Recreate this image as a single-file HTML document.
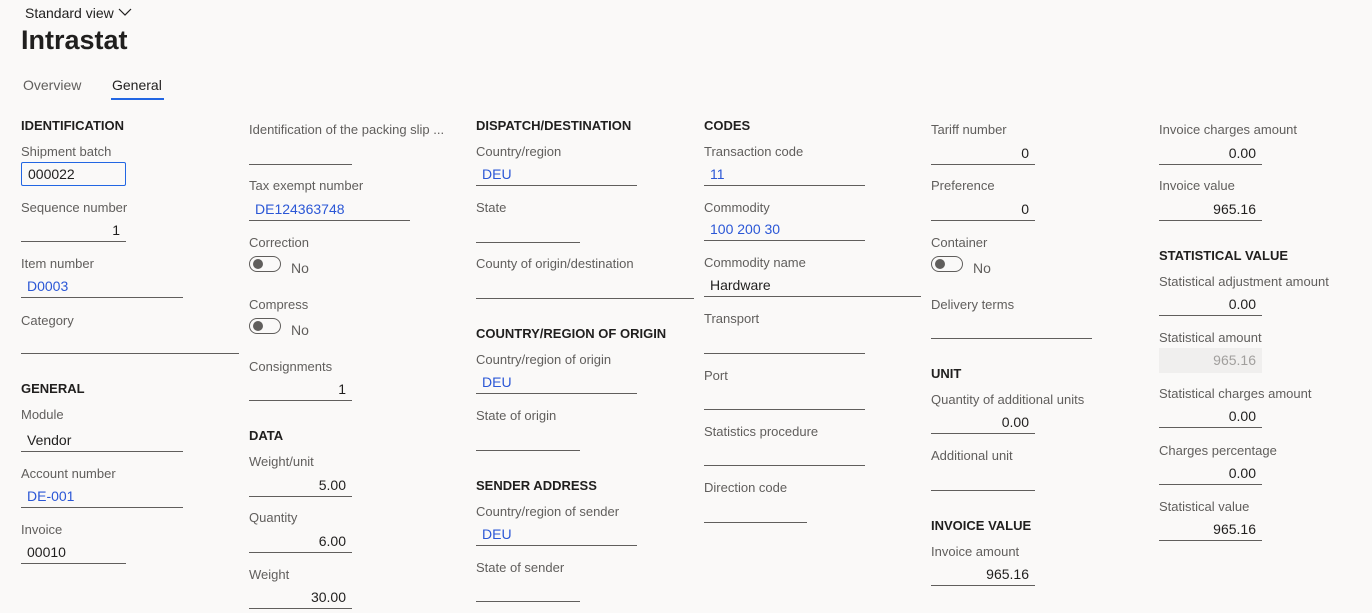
<!DOCTYPE html>
<html><head><meta charset="utf-8"><style>
body{margin:0;width:1372px;height:613px;background:#faf9f8;font-family:"Segoe UI","Liberation Sans",sans-serif;position:relative;overflow:hidden;color:#201f1e}
.a{position:absolute;white-space:nowrap}
.l{position:absolute;font-size:13px;line-height:16px;color:#605e5c;white-space:nowrap;margin-top:1px}
.h{position:absolute;font-size:13px;line-height:16px;font-weight:bold;color:#201f1e;white-space:nowrap;margin-top:1px}
.f{position:absolute;height:24px;border-bottom:1px solid #605e5c;font-size:14px;line-height:24px;padding:0 6px;box-sizing:border-box;color:#201f1e;white-space:nowrap}
.r{text-align:right}
.b{color:#2b57d6}
.t{position:absolute;width:32px;height:16px;border:1px solid #605e5c;border-radius:9px;box-sizing:border-box}
.t:after{content:"";position:absolute;left:3px;top:2px;width:10px;height:10px;border-radius:50%;background:#605e5c}
.no{position:absolute;font-size:14px;line-height:16px;color:#605e5c}
</style></head><body>
<div class="a" style="left:25px;top:4px;font-size:14px;line-height:18px">Standard view <svg width="14" height="10" viewBox="0 0 14 10" style="vertical-align:1px"><path d="M1 2 L7 8 L13 2" fill="none" stroke="#201f1e" stroke-width="1.2"/></svg></div>
<div class="a" style="left:21px;top:22px;font-size:27px;line-height:36px;font-weight:600">Intrastat</div>
<div class="a" style="left:23px;top:76px;font-size:14px;line-height:18px;color:#605e5c">Overview</div>
<div class="a" style="left:112px;top:76px;font-size:14px;line-height:18px">General</div>
<div class="a" style="left:111px;top:98px;width:53px;height:2px;background:#2266e3"></div>

<!-- col1 -->
<div class="h" style="left:21px;top:117px">IDENTIFICATION</div>
<div class="l" style="left:21px;top:143px">Shipment batch</div>
<div class="a" style="left:21px;top:162px;width:105px;height:24px;border:1px solid #2266e3;border-radius:2px;box-sizing:border-box;font-size:14px;line-height:22px;padding-left:6px">000022</div>
<div class="l" style="left:21px;top:199px">Sequence number</div>
<div class="f r" style="left:21px;top:218px;width:105px">1</div>
<div class="l" style="left:21px;top:255px">Item number</div>
<div class="f b" style="left:21px;top:274px;width:162px">D0003</div>
<div class="l" style="left:21px;top:312px">Category</div>
<div class="f" style="left:21px;top:330px;width:218px"></div>
<div class="h" style="left:21px;top:380px">GENERAL</div>
<div class="l" style="left:21px;top:406px">Module</div>
<div class="f" style="left:21px;top:428px;width:162px">Vendor</div>
<div class="l" style="left:21px;top:465px">Account number</div>
<div class="f b" style="left:21px;top:484px;width:162px">DE-001</div>
<div class="l" style="left:21px;top:521px">Invoice</div>
<div class="f" style="left:21px;top:540px;width:105px">00010</div>

<!-- col2 -->
<div class="l" style="left:249px;top:121px">Identification of the packing slip ...</div>
<div class="f" style="left:249px;top:141px;width:103px"></div>
<div class="l" style="left:249px;top:177px">Tax exempt number</div>
<div class="f b" style="left:249px;top:197px;width:161px">DE124363748</div>
<div class="l" style="left:249px;top:234px">Correction</div>
<div class="t" style="left:249px;top:256px"></div><div class="no" style="left:291px;top:260px">No</div>
<div class="l" style="left:249px;top:296px">Compress</div>
<div class="t" style="left:249px;top:318px"></div><div class="no" style="left:291px;top:322px">No</div>
<div class="l" style="left:249px;top:358px">Consignments</div>
<div class="f r" style="left:249px;top:377px;width:103px">1</div>
<div class="h" style="left:249px;top:427px">DATA</div>
<div class="l" style="left:249px;top:453px">Weight/unit</div>
<div class="f r" style="left:249px;top:473px;width:103px">5.00</div>
<div class="l" style="left:249px;top:509px">Quantity</div>
<div class="f r" style="left:249px;top:529px;width:103px">6.00</div>
<div class="l" style="left:249px;top:566px">Weight</div>
<div class="f r" style="left:249px;top:585px;width:103px">30.00</div>

<!-- col3 -->
<div class="h" style="left:476px;top:117px">DISPATCH/DESTINATION</div>
<div class="l" style="left:476px;top:143px">Country/region</div>
<div class="f b" style="left:476px;top:162px;width:161px">DEU</div>
<div class="l" style="left:476px;top:199px">State</div>
<div class="f" style="left:476px;top:219px;width:104px"></div>
<div class="l" style="left:476px;top:255px">County of origin/destination</div>
<div class="f" style="left:476px;top:275px;width:218px"></div>
<div class="h" style="left:476px;top:325px">COUNTRY/REGION OF ORIGIN</div>
<div class="l" style="left:476px;top:351px">Country/region of origin</div>
<div class="f b" style="left:476px;top:370px;width:161px">DEU</div>
<div class="l" style="left:476px;top:407px">State of origin</div>
<div class="f" style="left:476px;top:427px;width:104px"></div>
<div class="h" style="left:476px;top:477px">SENDER ADDRESS</div>
<div class="l" style="left:476px;top:503px">Country/region of sender</div>
<div class="f b" style="left:476px;top:522px;width:161px">DEU</div>
<div class="l" style="left:476px;top:559px">State of sender</div>
<div class="f" style="left:476px;top:578px;width:104px"></div>

<!-- col4 -->
<div class="h" style="left:704px;top:117px">CODES</div>
<div class="l" style="left:704px;top:143px">Transaction code</div>
<div class="f b" style="left:704px;top:162px;width:161px">11</div>
<div class="l" style="left:704px;top:199px">Commodity</div>
<div class="f b" style="left:704px;top:217px;width:161px">100 200 30</div>
<div class="l" style="left:704px;top:254px">Commodity name</div>
<div class="f" style="left:704px;top:273px;width:217px">Hardware</div>
<div class="l" style="left:704px;top:310px">Transport</div>
<div class="f" style="left:704px;top:330px;width:161px"></div>
<div class="l" style="left:704px;top:367px">Port</div>
<div class="f" style="left:704px;top:386px;width:161px"></div>
<div class="l" style="left:704px;top:423px">Statistics procedure</div>
<div class="f" style="left:704px;top:442px;width:161px"></div>
<div class="l" style="left:704px;top:479px">Direction code</div>
<div class="f" style="left:704px;top:499px;width:103px"></div>

<!-- col5 -->
<div class="l" style="left:931px;top:121px">Tariff number</div>
<div class="f r" style="left:931px;top:141px;width:104px">0</div>
<div class="l" style="left:931px;top:177px">Preference</div>
<div class="f r" style="left:931px;top:197px;width:104px">0</div>
<div class="l" style="left:931px;top:234px">Container</div>
<div class="t" style="left:931px;top:256px"></div><div class="no" style="left:973px;top:260px">No</div>
<div class="l" style="left:931px;top:296px">Delivery terms</div>
<div class="f" style="left:931px;top:315px;width:161px"></div>
<div class="h" style="left:931px;top:365px">UNIT</div>
<div class="l" style="left:931px;top:391px">Quantity of additional units</div>
<div class="f r" style="left:931px;top:410px;width:104px">0.00</div>
<div class="l" style="left:931px;top:447px">Additional unit</div>
<div class="f" style="left:931px;top:467px;width:104px"></div>
<div class="h" style="left:931px;top:517px">INVOICE VALUE</div>
<div class="l" style="left:931px;top:543px">Invoice amount</div>
<div class="f r" style="left:931px;top:562px;width:104px">965.16</div>

<!-- col6 -->
<div class="l" style="left:1159px;top:121px">Invoice charges amount</div>
<div class="f r" style="left:1159px;top:141px;width:103px">0.00</div>
<div class="l" style="left:1159px;top:177px">Invoice value</div>
<div class="f r" style="left:1159px;top:197px;width:103px">965.16</div>
<div class="h" style="left:1159px;top:247px">STATISTICAL VALUE</div>
<div class="l" style="left:1159px;top:273px">Statistical adjustment amount</div>
<div class="f r" style="left:1159px;top:292px;width:103px">0.00</div>
<div class="l" style="left:1159px;top:329px">Statistical amount</div>
<div class="a r" style="left:1159px;top:348px;width:103px;height:25px;background:#f0efee;font-size:14px;line-height:25px;padding-right:6px;box-sizing:border-box;color:#a19f9d">965.16</div>
<div class="l" style="left:1159px;top:385px">Statistical charges amount</div>
<div class="f r" style="left:1159px;top:404px;width:103px">0.00</div>
<div class="l" style="left:1159px;top:442px">Charges percentage</div>
<div class="f r" style="left:1159px;top:461px;width:103px">0.00</div>
<div class="l" style="left:1159px;top:498px">Statistical value</div>
<div class="f r" style="left:1159px;top:517px;width:103px">965.16</div>
</body></html>
